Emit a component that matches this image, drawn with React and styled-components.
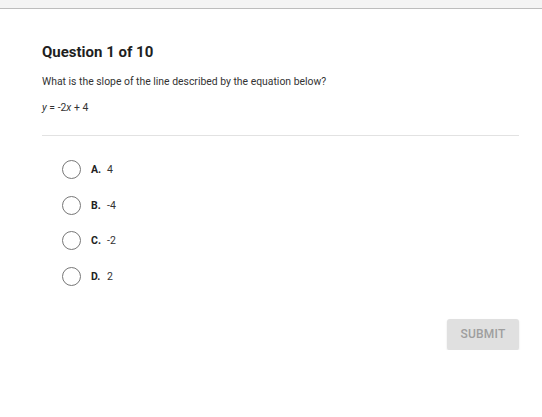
import React from "react";
import { useState } from "react";
import styled, { createGlobalStyle } from "styled-components";

const GlobalStyle = createGlobalStyle`
  body {
    margin: 0;
    background: #ffffff;
    font-family: Roboto, "Liberation Sans", Arial, sans-serif;
    color: #212121;
  }
`;

const TopBar = styled.div`
  height: 8px;
  background: #f4f4f4;
  border-bottom: 1px solid #bdbdbd;
`;

const Main = styled.div`
  padding: 34px 23px 0 42px;
`;

const Title = styled.h2`
  margin: 0;
  font-size: 15px;
  font-weight: 700;
  color: #1f1f1f;
  line-height: 18px;
`;

const Prompt = styled.p`
  margin: 14px 0 0;
  font-size: 10.4px;
  line-height: 14px;
  color: #333;
`;

const Equation = styled.p`
  margin: 12px 0 0;
  font-size: 10.4px;
  line-height: 14px;
  color: #333;

  i {
    font-style: italic;
  }
`;

const Divider = styled.hr`
  margin: 20px 0 0;
  border: none;
  border-top: 1px solid #e2e2e2;
`;

const Options = styled.div`
  display: flex;
  flex-direction: column;
  gap: 16.5px;
  padding: 24px 0 0 20px;
`;

const Option = styled.label`
  display: flex;
  align-items: center;
  height: 19px;
  cursor: pointer;
  font-size: 10.5px;
  color: #333;
`;

const Radio = styled.span`
  box-sizing: border-box;
  width: 19px;
  height: 19px;
  border-radius: 50%;
  border: 1px solid ${(p) => (p.checked ? "#1565c0" : "#777")};
  margin-right: 10px;
  display: flex;
  align-items: center;
  justify-content: center;

  &::after {
    content: "";
    width: 9px;
    height: 9px;
    border-radius: 50%;
    background: ${(p) => (p.checked ? "#1565c0" : "transparent")};
  }
`;

const Letter = styled.span`
  font-weight: 700;
  color: #222;
  width: 16px;
`;

const Footer = styled.div`
  display: flex;
  justify-content: flex-end;
  margin-top: 33px;
`;

const SubmitButton = styled.button`
  width: 72px;
  height: 31px;
  border: none;
  border-radius: 3px;
  background: #e0e0e0;
  color: #9e9e9e;
  font-family: Roboto, "Liberation Sans", Arial, sans-serif;
  font-size: 12px;
  font-weight: 500;
  letter-spacing: 0.2px;
  box-shadow: 0 1px 2px rgba(0, 0, 0, 0.12);
`;

const answers = [
  { key: "A", value: "4" },
  { key: "B", value: "-4" },
  { key: "C", value: "-2" },
  { key: "D", value: "2" },
];

export default function App() {
  const [picked, setPicked] = useState(null);

  return (
    <>
      <GlobalStyle />
      <TopBar />
      <Main>
        <Title>Question 1 of 10</Title>
        <Prompt>What is the slope of the line described by the equation below?</Prompt>
        <Equation>
          <i>y</i> = -2<i>x</i> + 4
        </Equation>
        <Divider />
        <Options>
          {answers.map((a) => (
            <Option key={a.key} onClick={() => setPicked(a.key)}>
              <Radio checked={picked === a.key} />
              <Letter>{a.key}.</Letter>
              {a.value}
            </Option>
          ))}
        </Options>
        <Footer>
          <SubmitButton disabled={!picked}>SUBMIT</SubmitButton>
        </Footer>
      </Main>
    </>
  );
}
